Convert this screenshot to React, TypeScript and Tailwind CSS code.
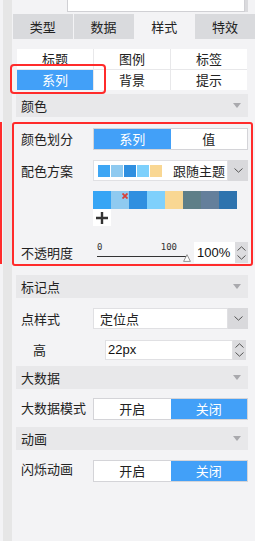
import React from "react";

const font = { fontFamily: '"Noto Sans CJK SC", "Liberation Sans", sans-serif' };

function Chevron({ up = false }: { up?: boolean }) {
  return (
    <svg width="9" height="5" viewBox="0 0 9 5" fill="none" stroke="#555" strokeWidth="1">
      {up ? <path d="M0.5 4.5 4.5 0.8 8.5 4.5" /> : <path d="M0.5 0.5 4.5 4.2 8.5 0.5" />}
    </svg>
  );
}

function Header({ title }: { title: string }) {
  return (
    <div className="ml-[4px] w-[232px] h-[23px] bg-[#e8e8ea] flex items-center justify-between pl-[5px] pr-[7px] text-[13px] text-[#222]">
      <span>{title}</span>
      <svg width="8" height="5" viewBox="0 0 8 5"><path d="M0 0h8L4 5z" fill="#a9a9ad" /></svg>
    </div>
  );
}

function Toggle({ items, active }: { items: string[]; active: number }) {
  return (
    <div className="flex w-[155px] h-[22px] border border-[#d4d4d8] bg-white text-[13px]">
      {items.map((t, i) => (
        <div key={t} className={`flex-1 flex items-center justify-center ${i === active ? "bg-[#42a0f8] text-white" : "text-[#222]"}`}>{t}</div>
      ))}
    </div>
  );
}

function Select({ value, children }: { value?: string; children?: React.ReactNode }) {
  return (
    <div className="flex w-[155px] h-[21px]">
      <div className="flex-1 bg-white border border-[#e0e0e3] flex items-center pl-[6px] text-[13px] text-[#222]">
        {children ?? value}
      </div>
      <div className="w-[20px] bg-[#d9d9dc] flex items-center justify-center"><Chevron /></div>
    </div>
  );
}

function Spinner() {
  return (
    <div className="w-[13px] bg-[#dcdcdf] flex flex-col items-center justify-center gap-[4px]">
      <Chevron up />
      <Chevron />
    </div>
  );
}

export default function App() {
  const swatches = ["#3ea6f4", "#8fcaf0", "#2f8fe0", "#7dd0fc", "#f9d793"];
  const palette = ["#36a5f5", "#8fcaf0", "#2f8fe0", "#7fd0fc", "#f9d793", "#5f7f88", "#647f9b", "#2e73ae"];

  return (
    <div className="relative w-[255px] h-[541px] bg-[#f3f3f5] flex overflow-hidden" style={font}>
      <div className="w-[3px] flex flex-col">
        <div className="mt-[122px] w-[2px] h-[142px] bg-[#ff2b2b]" />
      </div>
      <div className="w-[9px] bg-[#e6e6e6]" />

      <div className="flex-1 flex flex-col">
        <div className="h-[12px] flex">
          <div className="ml-[55px] w-[178px] bg-white border-x border-b border-[#d0d0d4]" />
          <div className="w-[3px] bg-[#dadadd]" />
        </div>

        <div className="mt-[2px] ml-[1px] grid grid-cols-4 gap-px h-[25px] text-[13px] text-[#222]">
          {["类型", "数据", "样式", "特效"].map((t, i) => (
            <div key={t} className={`flex items-center justify-center ${i === 2 ? "bg-[#f3f3f5]" : "bg-[#d9dadd]"}`}>{t}</div>
          ))}
        </div>

        <div className="mt-[10px] ml-[5px] w-[230px] grid grid-cols-3 gap-px bg-[#e8e8ea] text-[13px] text-[#222]">
          {["标题", "图例", "标签", "系列", "背景", "提示"].map((t, i) => (
            <div key={t} className={`h-[20px] flex items-center justify-center ${i === 3 ? "bg-[#42a0f8] text-white" : "bg-white"}`}>{t}</div>
          ))}
        </div>

        <div className="mt-[4px]"><Header title="颜色" /></div>

        <div className="mt-[5px] w-[241px] border-2 border-[#ff2b2b] rounded-[3px] pt-[4px] pb-[1px] text-[13px] text-[#222]">
          <div className="flex items-center">
            <div className="w-[79px] pl-[7px]">颜色划分</div>
            <Toggle items={["系列", "值"]} active={0} />
          </div>

          <div className="flex items-center mt-[10px]">
            <div className="w-[79px] pl-[7px]">配色方案</div>
            <Select>
              <div className="flex gap-[1px] -ml-[2px]">
                {swatches.map((c) => <div key={c} className="w-[12px] h-[12px]" style={{ background: c }} />)}
              </div>
              <span className="ml-[11px]">跟随主题</span>
            </Select>
          </div>

          <div className="ml-[79px] mt-[10px] flex">
            {palette.map((c, i) => (
              <div key={c} className="relative w-[18px] h-[18px]" style={{ background: c }}>
                {i === 1 && (
                  <svg className="absolute top-[2px] right-[1px]" width="6" height="6" viewBox="0 0 6 6" stroke="#d9413a" strokeWidth="1.8">
                    <path d="M0.5 0.5 5.5 5.5M5.5 0.5 0.5 5.5" />
                  </svg>
                )}
              </div>
            ))}
          </div>
          <div className="ml-[79px] w-[18px] h-[17px] bg-white flex items-center justify-center">
            <svg width="12" height="12" viewBox="0 0 12 12" stroke="#333" strokeWidth="2.4">
              <path d="M6 0v12M0 6h12" />
            </svg>
          </div>

          <div className="flex items-start mt-[16px]">
            <div className="w-[79px] pl-[7px] pt-[1px]">不透明度</div>
            <div className="relative w-[101px] h-[21px] pl-[4px]">
              <div className="flex justify-between w-[80px] pt-[1px] text-[9px] leading-[9px] text-[#333]" style={{ fontFamily: '"DejaVu Sans Mono", monospace' }}>
                <span>0</span>
                <span>100</span>
              </div>
              <div className="mt-[4px] w-[90px] h-px bg-[#333]" />
              <svg className="absolute left-[90px] top-[12px]" width="8" height="8" viewBox="0 0 8 8">
                <path d="M4 0.7 7.4 7.4H0.6z" fill="#fff" stroke="#888" strokeWidth="0.9" />
              </svg>
            </div>
            <div className="flex h-[21px]">
              <div className="w-[41px] bg-white flex items-center pl-[3px] text-[13px] text-[#111]" style={{ fontFamily: '"Liberation Sans", sans-serif' }}>100%</div>
              <Spinner />
            </div>
          </div>
        </div>

        <div className="mt-[9px]"><Header title="标记点" /></div>

        <div className="flex items-center mt-[10px] text-[13px] text-[#222]">
          <div className="w-[81px] pl-[9px]">点样式</div>
          <Select value="定位点" />
        </div>

        <div className="flex items-center mt-[11px] text-[13px] text-[#222]">
          <div className="w-[93px] pl-[21px]">高</div>
          <div className="flex h-[20px]">
            <div className="w-[128px] bg-white border border-[#e0e0e3] flex items-center pl-[2px] text-[13px] text-[#111]" style={{ fontFamily: '"Liberation Sans", sans-serif' }}>22px</div>
            <Spinner />
          </div>
        </div>

        <div className="mt-[6px]"><Header title="大数据" /></div>

        <div className="flex items-start mt-[9px] text-[13px] text-[#222]">
          <div className="w-[81px] pl-[9px]">大数据模式</div>
          <Toggle items={["开启", "关闭"]} active={1} />
        </div>

        <div className="mt-[7px]"><Header title="动画" /></div>

        <div className="flex items-start mt-[10px] text-[13px] text-[#222]">
          <div className="w-[81px] pl-[9px] -mt-[1px]">闪烁动画</div>
          <Toggle items={["开启", "关闭"]} active={1} />
        </div>
      </div>

      <div className="absolute left-[10px] top-[64px] w-[96px] h-[30px] border-2 border-[#ff2b2b] rounded-[4px]" />
    </div>
  );
}
